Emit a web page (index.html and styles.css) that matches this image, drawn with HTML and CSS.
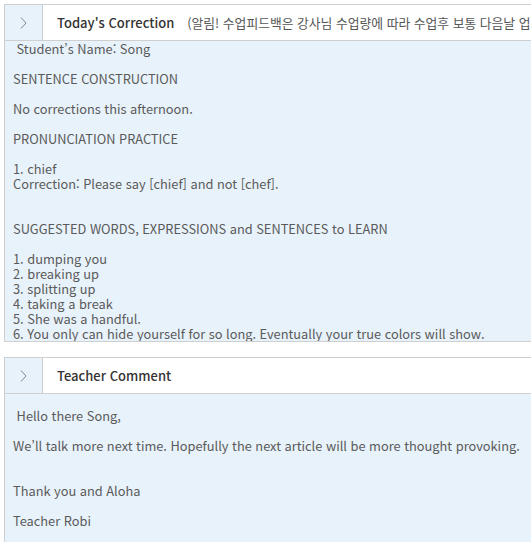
FILE: index.html
```html
<!DOCTYPE html>
<html lang="ko">
<head>
<meta charset="utf-8">
<title>Feedback</title>
<link rel="stylesheet" href="styles.css">
</head>
<body>
<section class="panel">
  <div class="panel-head">
    <div class="toggle"><svg width="7" height="12" viewBox="0 0 7 12"><polyline points="1,0.5 6,6 1,11.5" fill="none" stroke="#888" stroke-width="1"/></svg></div>
    <div class="title">Today's Correction <span class="notice">(알림! 수업피드백은 강사님 수업량에 따라 수업후 보통 다음날 업로드됩니다)</span></div>
  </div>
  <div class="panel-body scroll">
    <p>&nbsp;Student’s Name: Song</p>
    <p>SENTENCE CONSTRUCTION</p>
    <p>No corrections this afternoon.</p>
    <p>PRONUNCIATION PRACTICE</p>
    <p>1. chief<br>Correction: Please say [chief] and not [chef].<br><br></p>
    <p>SUGGESTED WORDS, EXPRESSIONS and SENTENCES to LEARN</p>
    <p>1. dumping you<br>2. breaking up<br>3. splitting up<br>4. taking a break<br>5. She was a handful.<br>6. You only can hide yourself for so long. Eventually your true colors will show.</p>
  </div>
</section>
<section class="panel second">
  <div class="panel-head">
    <div class="toggle"><svg width="7" height="12" viewBox="0 0 7 12"><polyline points="1,0.5 6,6 1,11.5" fill="none" stroke="#888" stroke-width="1"/></svg></div>
    <div class="title">Teacher Comment</div>
  </div>
  <div class="panel-body comment">
    <p>&nbsp;Hello there Song,</p>
    <p>We’ll talk more next time. Hopefully the next article will be more thought provoking.<br><br></p>
    <p>Thank you and Aloha</p>
    <p>Teacher Robi</p>
  </div>
</section>
</body>
</html>
```

FILE: styles.css
```css
html, body {
  margin: 0;
  padding: 0;
  background: #fff;
}
body {
  padding: 4px 0 0 4px;
  font-family: "Noto Sans CJK KR", "Noto Sans", sans-serif;
  font-size: 12.8px;
  color: #5a5a5a;
  overflow: hidden;
}
.panel {
  border-top: 1px solid #cfcfcf;
  border-left: 1px solid #cfcfcf;
  border-bottom: 1px solid #cfcfcf;
  background: #e8f2fb;
}
.panel.second {
  margin-top: 15px;
  border-bottom: none;
}
.panel-head {
  display: flex;
  height: 35px;
  background: #fff;
  border-bottom: 1px solid #cfcfcf;
}
.toggle {
  flex: none;
  width: 37px;
  border-right: 1px solid #cfcfcf;
  background: #e8f2fb;
  display: flex;
  align-items: center;
  justify-content: center;
}
.title {
  flex: 1;
  padding-left: 14px;
  display: flex;
  align-items: center;
  white-space: nowrap;
  overflow: hidden;
  font-size: 13px;
  font-weight: 500;
  color: #333;
}
.notice {
  font-weight: 400;
  color: #555;
  font-size: 12.8px;
  margin-left: 13px;
}
.panel-body {
  padding: 0 8px;
}
.panel-body p {
  margin: 0 0 15px;
  line-height: 15px;
  white-space: nowrap;
}
.scroll {
  height: 300px;
  overflow: hidden;
}
.comment {
  padding-top: 14px;
  padding-bottom: 20px;
}
```
